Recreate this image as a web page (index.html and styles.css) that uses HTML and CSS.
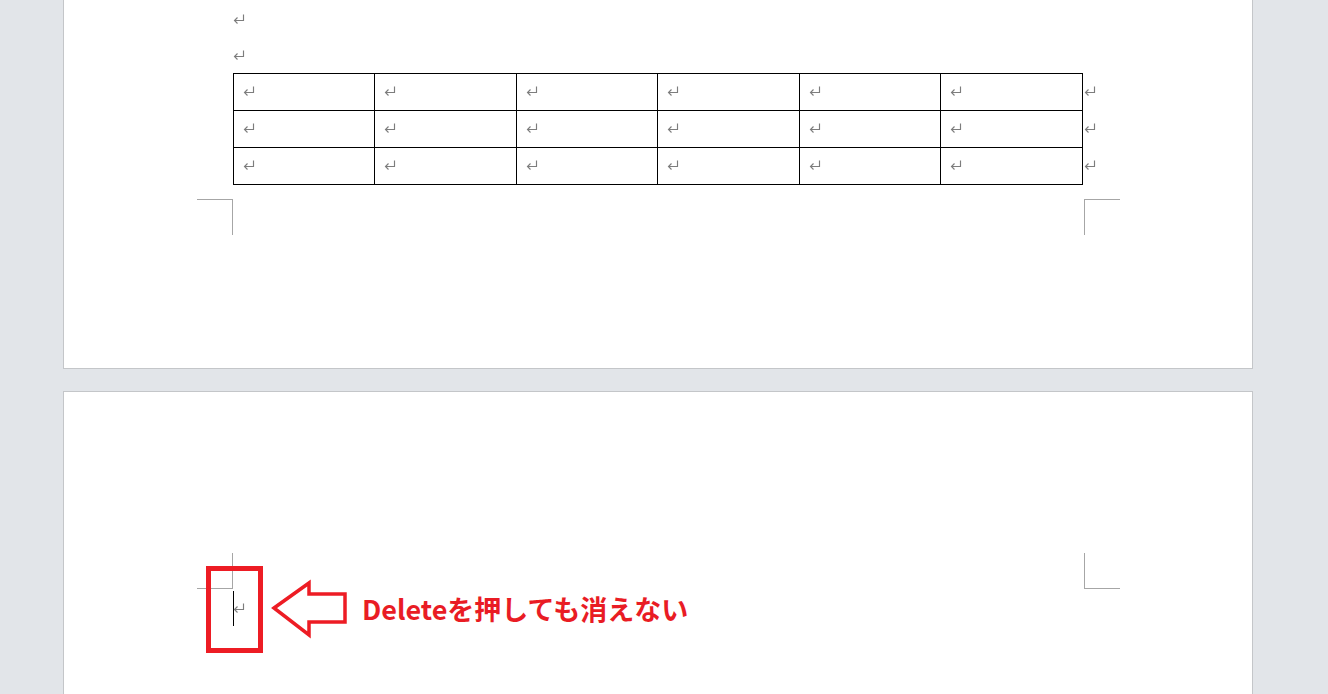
FILE: index.html
```html
<!DOCTYPE html>
<html lang="ja">
<head>
<meta charset="utf-8">
<title>Word</title>
<link rel="stylesheet" href="styles.css">
</head>
<body>
<div class="canvas">
  <div class="page page1">
    <div class="para"><svg class="pm" viewBox="0 0 12 11"><path d="M10.5 0.5V6.5H1.5M4.5 3.5L1.5 6.5L4.5 9.5"/></svg></div>
    <div class="para"><svg class="pm" viewBox="0 0 12 11"><path d="M10.5 0.5V6.5H1.5M4.5 3.5L1.5 6.5L4.5 9.5"/></svg></div>
    <div class="table-wrap">
      <div class="grid">
        <div class="cell"><svg class="pm" viewBox="0 0 12 11"><path d="M10.5 0.5V6.5H1.5M4.5 3.5L1.5 6.5L4.5 9.5"/></svg></div>
        <div class="cell"><svg class="pm" viewBox="0 0 12 11"><path d="M10.5 0.5V6.5H1.5M4.5 3.5L1.5 6.5L4.5 9.5"/></svg></div>
        <div class="cell"><svg class="pm" viewBox="0 0 12 11"><path d="M10.5 0.5V6.5H1.5M4.5 3.5L1.5 6.5L4.5 9.5"/></svg></div>
        <div class="cell"><svg class="pm" viewBox="0 0 12 11"><path d="M10.5 0.5V6.5H1.5M4.5 3.5L1.5 6.5L4.5 9.5"/></svg></div>
        <div class="cell"><svg class="pm" viewBox="0 0 12 11"><path d="M10.5 0.5V6.5H1.5M4.5 3.5L1.5 6.5L4.5 9.5"/></svg></div>
        <div class="cell"><svg class="pm" viewBox="0 0 12 11"><path d="M10.5 0.5V6.5H1.5M4.5 3.5L1.5 6.5L4.5 9.5"/></svg></div>
        <div class="cell"><svg class="pm" viewBox="0 0 12 11"><path d="M10.5 0.5V6.5H1.5M4.5 3.5L1.5 6.5L4.5 9.5"/></svg></div>
        <div class="cell"><svg class="pm" viewBox="0 0 12 11"><path d="M10.5 0.5V6.5H1.5M4.5 3.5L1.5 6.5L4.5 9.5"/></svg></div>
        <div class="cell"><svg class="pm" viewBox="0 0 12 11"><path d="M10.5 0.5V6.5H1.5M4.5 3.5L1.5 6.5L4.5 9.5"/></svg></div>
        <div class="cell"><svg class="pm" viewBox="0 0 12 11"><path d="M10.5 0.5V6.5H1.5M4.5 3.5L1.5 6.5L4.5 9.5"/></svg></div>
        <div class="cell"><svg class="pm" viewBox="0 0 12 11"><path d="M10.5 0.5V6.5H1.5M4.5 3.5L1.5 6.5L4.5 9.5"/></svg></div>
        <div class="cell"><svg class="pm" viewBox="0 0 12 11"><path d="M10.5 0.5V6.5H1.5M4.5 3.5L1.5 6.5L4.5 9.5"/></svg></div>
        <div class="cell"><svg class="pm" viewBox="0 0 12 11"><path d="M10.5 0.5V6.5H1.5M4.5 3.5L1.5 6.5L4.5 9.5"/></svg></div>
        <div class="cell"><svg class="pm" viewBox="0 0 12 11"><path d="M10.5 0.5V6.5H1.5M4.5 3.5L1.5 6.5L4.5 9.5"/></svg></div>
        <div class="cell"><svg class="pm" viewBox="0 0 12 11"><path d="M10.5 0.5V6.5H1.5M4.5 3.5L1.5 6.5L4.5 9.5"/></svg></div>
        <div class="cell"><svg class="pm" viewBox="0 0 12 11"><path d="M10.5 0.5V6.5H1.5M4.5 3.5L1.5 6.5L4.5 9.5"/></svg></div>
        <div class="cell"><svg class="pm" viewBox="0 0 12 11"><path d="M10.5 0.5V6.5H1.5M4.5 3.5L1.5 6.5L4.5 9.5"/></svg></div>
        <div class="cell"><svg class="pm" viewBox="0 0 12 11"><path d="M10.5 0.5V6.5H1.5M4.5 3.5L1.5 6.5L4.5 9.5"/></svg></div>
      </div>
      <div class="row-ends">
        <div class="row-end"><svg class="pm" viewBox="0 0 12 11"><path d="M10.5 0.5V6.5H1.5M4.5 3.5L1.5 6.5L4.5 9.5"/></svg></div>
        <div class="row-end"><svg class="pm" viewBox="0 0 12 11"><path d="M10.5 0.5V6.5H1.5M4.5 3.5L1.5 6.5L4.5 9.5"/></svg></div>
        <div class="row-end"><svg class="pm" viewBox="0 0 12 11"><path d="M10.5 0.5V6.5H1.5M4.5 3.5L1.5 6.5L4.5 9.5"/></svg></div>
      </div>
    </div>
    <div class="corners corners-bottom">
      <div class="corner c-bl"></div>
      <div class="corner c-br"></div>
    </div>
  </div>

  <div class="page page2">
    <div class="corners corners-top">
      <div class="corner c-tl"></div>
      <div class="corner c-tr"></div>
    </div>
    <div class="cursor-line">
      <span class="caret"></span>
      <svg class="pm pm-last" viewBox="0 0 12 11"><path d="M10.5 0.5V6.5H1.5M4.5 3.5L1.5 6.5L4.5 9.5"/></svg>
    </div>

    <div class="note-box"></div>
    <svg class="note-arrow" viewBox="0 0 82 62" width="82" height="62">
      <path d="M6 30L41 5V16H77V44H41V57Z"/>
    </svg>
    <div class="note-text">Deleteを押しても消えない</div>
  </div>
</div>
</body>
</html>
```

FILE: styles.css
```css
html, body {
  margin: 0;
  padding: 0;
}
body {
  background: #e2e5e9;
  width: 1328px;
  height: 694px;
  overflow: hidden;
  font-family: "Noto Sans CJK JP", "Noto Sans", sans-serif;
}
.canvas {
  display: flex;
  flex-direction: column;
  gap: 22px;
}
.page {
  margin-left: 63px;
  background: #ffffff;
  border: 1px solid #c4c6c9;
  padding-left: 169px;
  box-sizing: content-box;
  width: 1019px;
}
.page1 {
  border-top: none;
  height: 368px;
}
.page2 {
  position: relative;
  height: 141px;
  padding-top: 161px;
}
.pm {
  display: block;
  width: 12px;
  height: 11px;
  fill: none;
  stroke: #7d7d7d;
  stroke-width: 1.15;
}
.para {
  height: 36px;
  padding-top: 14px;
  box-sizing: border-box;
}
.table-wrap {
  display: flex;
  margin-top: 1px;
}
.grid {
  display: grid;
  grid-template-columns: 140px 141px 140px 141px 140px 141px;
  grid-auto-rows: 36px;
  gap: 1px;
  padding: 1px;
  background: #000000;
}
.cell {
  background: #ffffff;
  padding: 12px 0 0 9px;
}
.row-ends {
  display: flex;
  flex-direction: column;
  padding-top: 1px;
  margin-left: 1px;
}
.row-end {
  height: 37px;
  padding-top: 12px;
  box-sizing: border-box;
}
.corners {
  display: flex;
  justify-content: space-between;
  width: 923px;
  margin-left: -36px;
}
.corners-bottom {
  margin-top: 14px;
}
.corner {
  width: 35px;
  height: 35px;
}
.c-bl {
  border-top: 1px solid #a6a6a6;
  border-right: 1px solid #a6a6a6;
}
.c-br {
  border-top: 1px solid #a6a6a6;
  border-left: 1px solid #a6a6a6;
}
.c-tl {
  border-bottom: 1px solid #a6a6a6;
  border-right: 1px solid #a6a6a6;
}
.c-tr {
  border-bottom: 1px solid #a6a6a6;
  border-left: 1px solid #a6a6a6;
}
.cursor-line {
  display: flex;
  align-items: flex-start;
  margin-top: 2px;
  height: 36px;
}
.caret {
  display: block;
  width: 1px;
  height: 35px;
  background: #000000;
}
.pm-last {
  margin-top: 12px;
  margin-left: -1px;
}
.note-box {
  position: absolute;
  left: 142px;
  top: 174px;
  width: 57px;
  height: 87px;
  box-sizing: border-box;
  border: 5px solid #ed1c24;
}
.note-arrow {
  position: absolute;
  left: 204px;
  top: 186px;
  fill: none;
  stroke: #ed1c24;
  stroke-width: 3.5;
  stroke-linejoin: miter;
}
.note-text {
  position: absolute;
  left: 298px;
  top: 203px;
  font-size: 27px;
  line-height: 27px;
  font-weight: bold;
  color: #e91c24;
  white-space: nowrap;
}
```
